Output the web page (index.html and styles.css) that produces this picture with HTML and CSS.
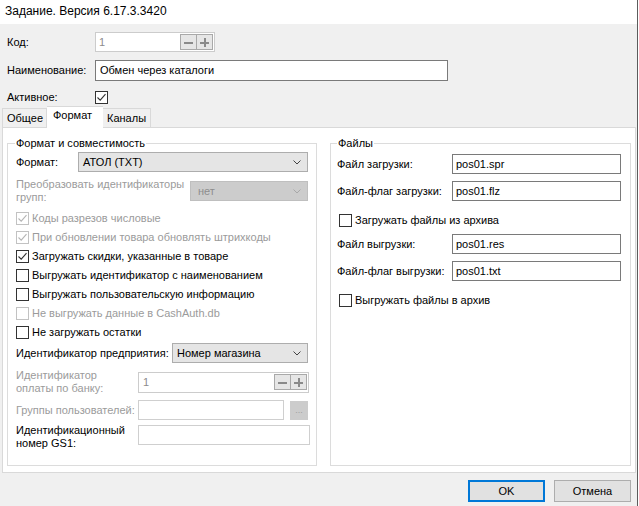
FILE: index.html
```html
<!DOCTYPE html>
<html lang="ru">
<head>
<meta charset="utf-8">
<title>Задание</title>
<link rel="stylesheet" href="styles.css">
</head>
<body>
<div class="window">
  <div class="titlebar">Задание. Версия 6.17.3.3420</div>
  <div class="client">
    <div class="head">
      <div class="row row-code">
        <span class="lbl">Код:</span>
        <div class="spin spin-code disabled">
          <span class="spin-val">1</span>
          <span class="spin-btn"><span class="minus"></span></span>
          <span class="spin-btn"><span class="plus"></span></span>
        </div>
      </div>
      <div class="row row-name">
        <span class="lbl">Наименование:</span>
        <div class="input input-name">Обмен через каталоги</div>
      </div>
      <div class="row row-active">
        <span class="lbl">Активное:</span>
        <span class="cb"><svg viewBox="0 0 11 11" width="11" height="11"><polyline points="1.5,5.5 4.2,8.2 9.5,2.2" /></svg></span>
      </div>
    </div>

    <div class="tabs">
      <div class="tab tab-1">Общее</div>
      <div class="tab tab-2 active">Формат</div>
      <div class="tab tab-3">Каналы</div>
    </div>

    <div class="page">
      <fieldset class="group group-left">
        <legend>Формат и совместимость</legend>
        <div class="frow r-format">
          <span class="flbl w62">Формат:</span>
          <div class="select select-format"><span>АТОЛ (TXT)</span><svg class="chev" viewBox="0 0 8 5" width="8" height="5"><polyline points="0.5,0.5 4,4 7.5,0.5"/></svg></div>
        </div>
        <div class="frow r-two r-conv dis">
          <span class="flbl w174">Преобразовать идентификаторы групп:</span>
          <div class="select select-conv disabled"><span>нет</span><svg class="chev" viewBox="0 0 8 5" width="8" height="5"><polyline points="0.5,0.5 4,4 7.5,0.5"/></svg></div>
        </div>
        <div class="checks">
          <div class="chk dis"><span class="cb disabled"><svg viewBox="0 0 11 11" width="11" height="11"><polyline points="1.5,5.5 4.2,8.2 9.5,2.2" /></svg></span>Коды разрезов числовые</div>
          <div class="chk dis"><span class="cb disabled"><svg viewBox="0 0 11 11" width="11" height="11"><polyline points="1.5,5.5 4.2,8.2 9.5,2.2" /></svg></span>При обновлении товара обновлять штрихкоды</div>
          <div class="chk"><span class="cb"><svg viewBox="0 0 11 11" width="11" height="11"><polyline points="1.5,5.5 4.2,8.2 9.5,2.2" /></svg></span>Загружать скидки, указанные в товаре</div>
          <div class="chk"><span class="cb"></span>Выгружать идентификатор с наименованием</div>
          <div class="chk"><span class="cb"></span>Выгружать пользовательскую информацию</div>
          <div class="chk dis"><span class="cb disabled"></span>Не выгружать данные в CashAuth.db</div>
          <div class="chk"><span class="cb"></span>Не загружать остатки</div>
        </div>
        <div class="frow r-ent">
          <span class="flbl w156">Идентификатор предприятия:</span>
          <div class="select select-ent"><span>Номер магазина</span><svg class="chev" viewBox="0 0 8 5" width="8" height="5"><polyline points="0.5,0.5 4,4 7.5,0.5"/></svg></div>
        </div>
        <div class="frow r-two r-pay">
          <span class="flbl w122 narrow dis">Идентификатор оплаты по банку:</span>
          <div class="spin spin-pay disabled">
            <span class="spin-val">1</span>
            <span class="spin-btn"><span class="minus"></span></span>
            <span class="spin-btn"><span class="plus"></span></span>
          </div>
        </div>
        <div class="frow r-groups">
          <span class="flbl w122 dis">Группы пользователей:</span>
          <div class="input input-groups disabled"></div>
          <span class="dots">...</span>
        </div>
        <div class="frow r-two r-gs1">
          <span class="flbl w122">Идентификационный номер GS1:</span>
          <div class="input input-gs1 light"></div>
        </div>
      </fieldset>

      <fieldset class="group group-right">
        <legend>Файлы</legend>
        <div class="frow r-file first">
          <span class="flbl w115">Файл загрузки:</span>
          <div class="input input-file">pos01.spr</div>
        </div>
        <div class="frow r-file">
          <span class="flbl w115">Файл-флаг загрузки:</span>
          <div class="input input-file">pos01.flz</div>
        </div>
        <div class="chk chk-right"><span class="cb"></span>Загружать файлы из архива</div>
        <div class="frow r-file after-chk">
          <span class="flbl w115">Файл выгрузки:</span>
          <div class="input input-file">pos01.res</div>
        </div>
        <div class="frow r-file">
          <span class="flbl w115">Файл-флаг выгрузки:</span>
          <div class="input input-file">pos01.txt</div>
        </div>
        <div class="chk chk-right"><span class="cb"></span>Выгружать файлы в архив</div>
      </fieldset>
    </div>

    <div class="footer">
      <button class="btn btn-ok">OK</button>
      <button class="btn">Отмена</button>
    </div>
  </div>
</div>
</body>
</html>
```

FILE: styles.css
```css
* { box-sizing: border-box; }
html, body { margin: 0; padding: 0; }
body {
  font-family: "Liberation Sans", Arial, sans-serif;
  font-size: 11px;
  line-height: 13px;
  color: #000;
  background: #fff;
}
.window {
  width: 638px;
  height: 506px;
  border-right: 1px solid #5c5c5c;
  background: #f0f0f0;
  display: flex;
  flex-direction: column;
}
.titlebar {
  height: 24px;
  background: #fff;
  font-size: 12px;
  line-height: 23px;
  padding-left: 5px;
}
.client { flex: 1; display: flex; flex-direction: column; }

.head { padding: 8px 0 0 7px; }
.row { display: flex; align-items: center; }
.head .lbl { width: 88px; }
.row-code { height: 20px; }
.row-name { margin-top: 8px; height: 21px; }
.row-active { margin-top: 10px; height: 13px; }

.input {
  background: #fff;
  border: 1px solid #7a7a7a;
  height: 20px;
  padding: 0 3px;
  display: flex;
  align-items: center;
  white-space: nowrap;
}
.input-name { width: 353px; height: 21px; padding-left: 4px; }
.input.disabled, .input.light { border-color: #cfcfcf; }

.spin {
  display: flex;
  align-items: center;
  background: #fff;
  border: 1px solid #cccccc;
  height: 20px;
  padding: 0 1px 0 3px;
}
.spin.disabled .spin-val { color: #8c8c8c; }
.spin-val { flex: 1; }
.spin-code { width: 120px; }
.spin-btn {
  width: 17px;
  height: 16px;
  background: #e6e6e6;
  border: 1px solid #a9a9a9;
  display: flex;
  align-items: center;
  justify-content: center;
  position: relative;
}
.spin-btn + .spin-btn { border-left: 0; width: 16px; }
.minus, .plus { display: block; width: 9px; height: 9px; position: relative; }
.minus::before, .plus::before, .plus::after {
  content: "";
  position: absolute;
  background: #8a8a8a;
}
.minus::before, .plus::before { left: 0; right: 0; top: 4px; height: 2px; }
.plus::after { top: 0; bottom: 0; left: 4px; width: 2px; }

.cb {
  width: 13px;
  height: 13px;
  border: 1px solid #333;
  background: #fff;
  display: inline-flex;
  align-items: center;
  justify-content: center;
  flex: none;
}
.cb svg polyline { fill: none; stroke: #333; stroke-width: 1.1; }
.cb.disabled { border-color: #c2c2c2; }
.cb.disabled svg polyline { stroke: #b5b5b5; }

.tabs {
  margin-top: 2px;
  height: 21px;
  display: flex;
  align-items: flex-end;
  padding-left: 2px;
}
.tab {
  height: 19px;
  background: #f0f0f0;
  border: 1px solid #d9d9d9;
  border-bottom: 0;
  line-height: 18px;
  padding: 0 4px;
}
.tab-1 { width: 45px; padding-left: 4px; }
.tab-2 { width: 56px; padding-left: 6px; }
.tab-3 { width: 48px; padding-left: 4px; border-left: 0; }
.tab.active {
  height: 22px;
  margin-bottom: -1px;
  background: #fff;
  border-left: 0;
  border-right: 0;
  position: relative;
  z-index: 1;
  line-height: 17px;
}

.page {
  margin-left: 2px;
  width: 634px;
  height: 346px;
  border: 1px solid #d9d9d9;
  background: #fff;
  display: flex;
  gap: 13px;
  padding: 9px 0 0 4px;
}
.group {
  margin: 0;
  border: 1px solid #dcdcdc;
  height: 329px;
  min-width: 0;
}
.group legend {
  padding: 0 1px;
  line-height: 13px;
  margin-left: -1px;
}
.group-left { width: 310px; padding: 2px 0 0 8px; }
.group-right { width: 301px; padding: 2px 0 0 6px; }
.group-right legend { margin-left: 0; }

.frow { display: flex; align-items: center; height: 20px; }
.flbl { flex: none; }
.w62 { width: 62px; }
.w174 { width: 174px; }
.w156 { width: 156px; }
.w122 { width: 122px; }
.w115 { width: 115px; }
.narrow { padding-right: 24px; }
.dis, .flbl.dis { color: #9b9b9b; }

.r-two { height: 26px; }
.r-conv { margin-top: 6px; }
.select {
  height: 20px;
  background: #e5e5e5;
  border: 1px solid #adadad;
  display: flex;
  align-items: center;
  justify-content: space-between;
  padding: 0 6px 0 4px;
}
.chev polyline { fill: none; stroke: #444; stroke-width: 1; }
.select-format { width: 230px; }
.select-conv { width: 118px; background: #cccccc; border-color: #bfbfbf; color: #8e8e8e; padding-left: 7px; }
.select-conv .chev polyline { stroke: #a8a8a8; }
.select-ent { width: 136px; }

.checks { margin-top: 5px; }
.chk { display: flex; align-items: center; height: 19px; white-space: nowrap; }
.chk .cb { margin-right: 3px; }

.r-ent { margin-top: 1px; }
.r-pay { margin-top: 6px; }
.spin-pay { width: 171px; height: 21px; padding-left: 4px; }
.r-groups { margin-top: 5px; }
.input-groups { width: 146px; }
.dots {
  margin-left: 6px;
  width: 18px;
  height: 19px;
  background: #cccccc;
  color: #a0a0a0;
  font-size: 9px;
  display: flex;
  align-items: center;
  justify-content: center;
}
.r-gs1 { margin-top: 4px; align-items: flex-start; }
.input-gs1 { width: 172px; margin-top: 1px; }

.r-file.first { margin-top: 2px; }
.r-file { margin-top: 7px; }
.r-file.after-chk { margin-top: 4px; }
.input-file { width: 169px; }
.chk-right { margin-top: 10px; padding-left: 2px; }

.footer {
  display: flex;
  justify-content: flex-end;
  gap: 9px;
  padding: 7px 6px 0 0;
}
.btn {
  font: inherit;
  width: 77px;
  height: 22px;
  background: #e1e1e1;
  border: 1px solid #adadad;
  padding: 0;
  color: #000;
}
.btn-ok { border: 2px solid #0078d7; }
```
